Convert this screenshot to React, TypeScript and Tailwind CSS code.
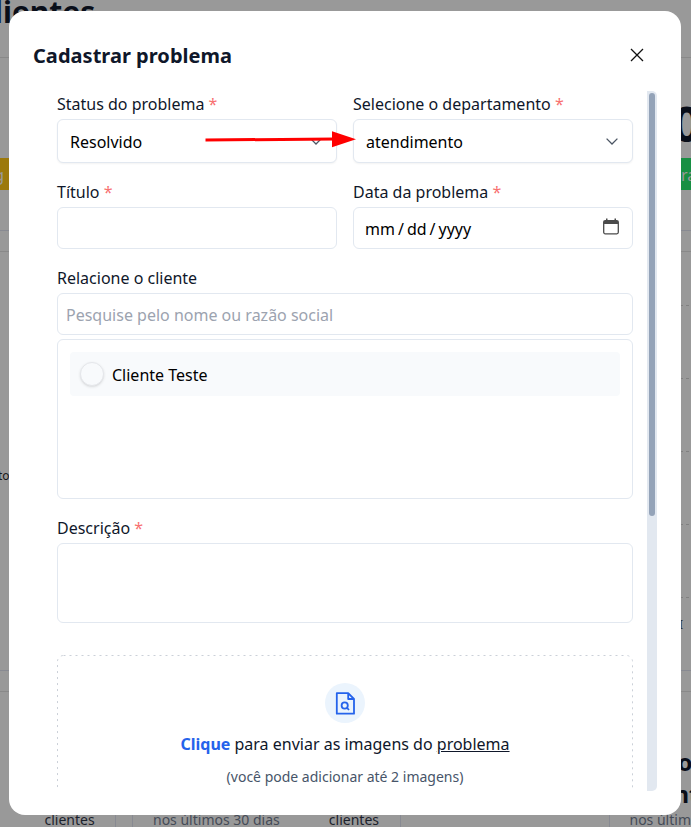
import type { ReactNode } from "react";

function Label({ children, required = false }: { children: ReactNode; required?: boolean }) {
  return (
    <span className="block h-[27px] leading-6 text-[#0f172a]">
      {children}
      {required && <span className="text-[#f87171]"> *</span>}
    </span>
  );
}

function Select({ value }: { value: string }) {
  return (
    <div className="flex h-11 items-center justify-between rounded-md border border-[#e2e8f0] bg-white px-3 text-black shadow-[0_1px_2px_rgba(0,0,0,0.05)]">
      <span className="pt-px">{value}</span>
      <svg width="16" height="16" viewBox="0 0 16 16" fill="none" stroke="#4b5563" strokeWidth="1.3" className="block">
        <path d="M2.6 5.6 8 11l5.4-5.4" />
      </svg>
    </div>
  );
}

function PageBehind() {
  return (
    <div className="flex h-[827px] w-full flex-col overflow-hidden bg-[#999999]">
      <div className="h-[57px] overflow-hidden">
        <h1 className="-mt-2 flex text-[30px] leading-10 font-bold text-[#090e19]">
          <span className="-ml-[6px] text-[#0b2553]">l</span>
          <span>ientes</span>
        </h1>
      </div>
      <div className="flex h-[174px] items-start justify-between border-y border-t-[#898989] border-b-[#888a92]">
        <span className="mt-[100px] flex h-8 w-[9px] items-center justify-end overflow-hidden bg-[#9c790b] pr-[5px] pt-[2px] text-base text-[#999999]">g</span>
        <div className="flex w-[12px] flex-col overflow-hidden">
          <span className="mt-[34px] h-[66px] text-[48px] leading-[64px] font-bold text-[#090e19]"><span className="-ml-[6px]">0</span></span>
          <span className="flex h-8 items-center bg-[#178f43] pt-[2px] pl-[2px] text-base text-[#999999]">ra</span>
        </div>
      </div>
      <div className="mt-5 flex h-[420px] justify-between border-y border-t-[#898989] border-b-[#888a92]">
        <span className="mt-[214px] -ml-[2px] text-xs leading-5 text-[#171717]">to</span>
        <div className="flex w-[10px] flex-col pt-[53px]">
          {[0, 1, 2, 3, 4].map((row) => (
            <span key={row} className="mb-[72px] flex h-px w-[10px] shrink-0 gap-[3px]">
              <span className="w-[2px] bg-[#808080]" />
              <span className="w-[3px] bg-[#808080]" />
            </span>
          ))}
          <span className="-mt-[53px] -ml-[2px] text-xs leading-4 text-[#333333]">I</span>
        </div>
      </div>
      <div className="mt-5 flex h-[136px] border-t border-[#898989] text-sm leading-5">
        <div className="flex w-[116px] items-start border-r border-[#888a92] pt-[118px] pl-[44.5px] text-[#1c222c]">clientes</div>
        <div className="ml-4 flex w-[269px] items-start justify-between border-x border-[#888a92] pt-[118px] pr-[21px] pl-5">
          <span className="text-[#454b57]">nos últimos 30 dias</span>
          <span className="text-[#1c222c]">clientes</span>
        </div>
        <div className="ml-[208px] w-[82px] overflow-hidden border-l border-[#888a92] pt-[54px] pl-[19.5px] whitespace-nowrap">
          <div className="pl-[48px] text-2xl leading-8 font-bold text-[#090e19]">
            <div>os</div>
            <div className="-ml-[4px]">nt</div>
          </div>
          <span className="text-[#454b57]">nos últimos</span>
        </div>
      </div>
    </div>
  );
}

function ClientPicker() {
  return (
    <section className="mt-[17px]">
      <Label>Relacione o cliente</Label>
      <div className="flex h-[42px] items-center rounded-md border border-[#e2e8f0] px-2 pt-px text-[#9ca3af]">
        Pesquise pelo nome ou razão social
      </div>
      <div className="mt-1 h-40 rounded-md border border-[#e2e8f0] p-3">
        <div className="flex h-11 items-center gap-2 rounded-sm bg-[#f8fafc] px-[10px] text-black">
          <span className="h-6 w-6 rounded-full border border-[#e5e7eb] bg-[#f8fafc] shadow" />
          <span className="pt-px">Cliente Teste</span>
        </div>
      </div>
    </section>
  );
}

function UploadBox() {
  return (
    <div className="mt-8 flex h-[180px] flex-col items-center">
      <svg width="576" height="180" className="block" fill="none">
        <rect x="0.5" y="0.5" width="575" height="179" rx="6" stroke="#cbd0d8" strokeDasharray="2 4" />
      </svg>
      <div className="-mt-[152px] flex flex-col items-center">
        <span className="flex h-10 w-10 items-center justify-center rounded-full bg-[#ebf4fd]">
          <svg width="24" height="24" viewBox="0 0 24 24" fill="none" stroke="#2563eb" strokeWidth="1.8" strokeLinejoin="round">
            <path d="M3.8 2.2h11.4l5.8 5.8v14.7H3.8zM15.2 2.2V8H21" />
            <circle cx="11.7" cy="14.5" r="3.1" />
            <path d="m13.8 16.6 2.2 2.4" />
          </svg>
        </span>
        <p className="mt-[9px] leading-6 text-[#0f172a]">
          <strong className="font-bold text-[#2563eb]">Clique</strong> para enviar as imagens do{" "}
          <span className="underline">problema</span>
        </p>
        <p className="mt-[11px] text-sm leading-5 text-[#475569]">(você pode adicionar até 2 imagens)</p>
      </div>
    </div>
  );
}

export default function App() {
  return (
    <div className="relative h-[827px] w-[691px] overflow-hidden font-['Noto_Sans',sans-serif] text-base">
      <PageBehind />
      <div role="dialog" className="absolute top-[11px] left-[9px] flex h-[804px] w-[672px] flex-col rounded-2xl bg-white p-6">
        <header className="flex h-14 items-start justify-between">
          <h2 className="pt-[7px] text-xl leading-7 font-bold tracking-[0.03px] text-[#0f172a]">Cadastrar problema</h2>
          <svg width="14" height="14" viewBox="0 0 14 14" stroke="#111111" strokeWidth="1.3" className="mt-[13px] mr-[13px] block">
            <path d="M1 1l12 12M13 1 1 13" />
          </svg>
        </header>
        <div className="flex h-[700px] overflow-hidden">
          <form className="w-[614px] shrink-0 pt-px pr-[14px] pl-6">
            <div className="grid grid-cols-2 gap-x-4 gap-y-[17px]">
              <div>
                <Label required>Status do problema</Label>
                <Select value="Resolvido" />
              </div>
              <div>
                <Label required>Selecione o departamento</Label>
                <Select value="atendimento" />
              </div>
              <div>
                <Label required>Título</Label>
                <div className="h-[42px] rounded-md border border-[#e2e8f0]" />
              </div>
              <div>
                <Label required>Data da problema</Label>
                <div className="flex h-[42px] items-center justify-between rounded-md border border-[#e2e8f0] pr-[13px] pl-[11px] text-black">
                  <span className="flex gap-[3px] pt-px">
                    <span>mm</span><span>/</span><span>dd</span><span>/</span><span>yyyy</span>
                  </span>
                  <svg width="16" height="17" viewBox="0 0 16 17" fill="none" className="-mt-[3px] block">
                    <rect x="0.7" y="2.7" width="14.6" height="13.1" rx="1.5" stroke="#4b4b4b" strokeWidth="1.3" />
                    <path d="M.8 3h14.4v3H.8zM3 .5h1.5V3H3zM11.5.5H13V3h-1.5z" fill="#4b4b4b" />
                  </svg>
                </div>
              </div>
            </div>
            <ClientPicker />
            <section className="mt-[17px]">
              <Label required>Descrição</Label>
              <div className="h-20 rounded-md border border-[#e2e8f0]" />
            </section>
            <UploadBox />
          </form>
          <div className="h-[700px] w-[10px] shrink-0 rounded-r-[5px] bg-[#e2e8f0] p-[2px]">
            <div className="h-[423px] w-[6px] rounded-full bg-[#94a3b8]" />
          </div>
        </div>
      </div>
      <svg width="152" height="18" viewBox="0 0 152 18" className="absolute top-[130px] left-[205px]">
        <path d="M.5 10 130 9" stroke="#ff0000" strokeWidth="3" />
        <path d="M127 1.2 151 9.2 127 17.2z" fill="#ff0000" />
      </svg>
    </div>
  );
}
